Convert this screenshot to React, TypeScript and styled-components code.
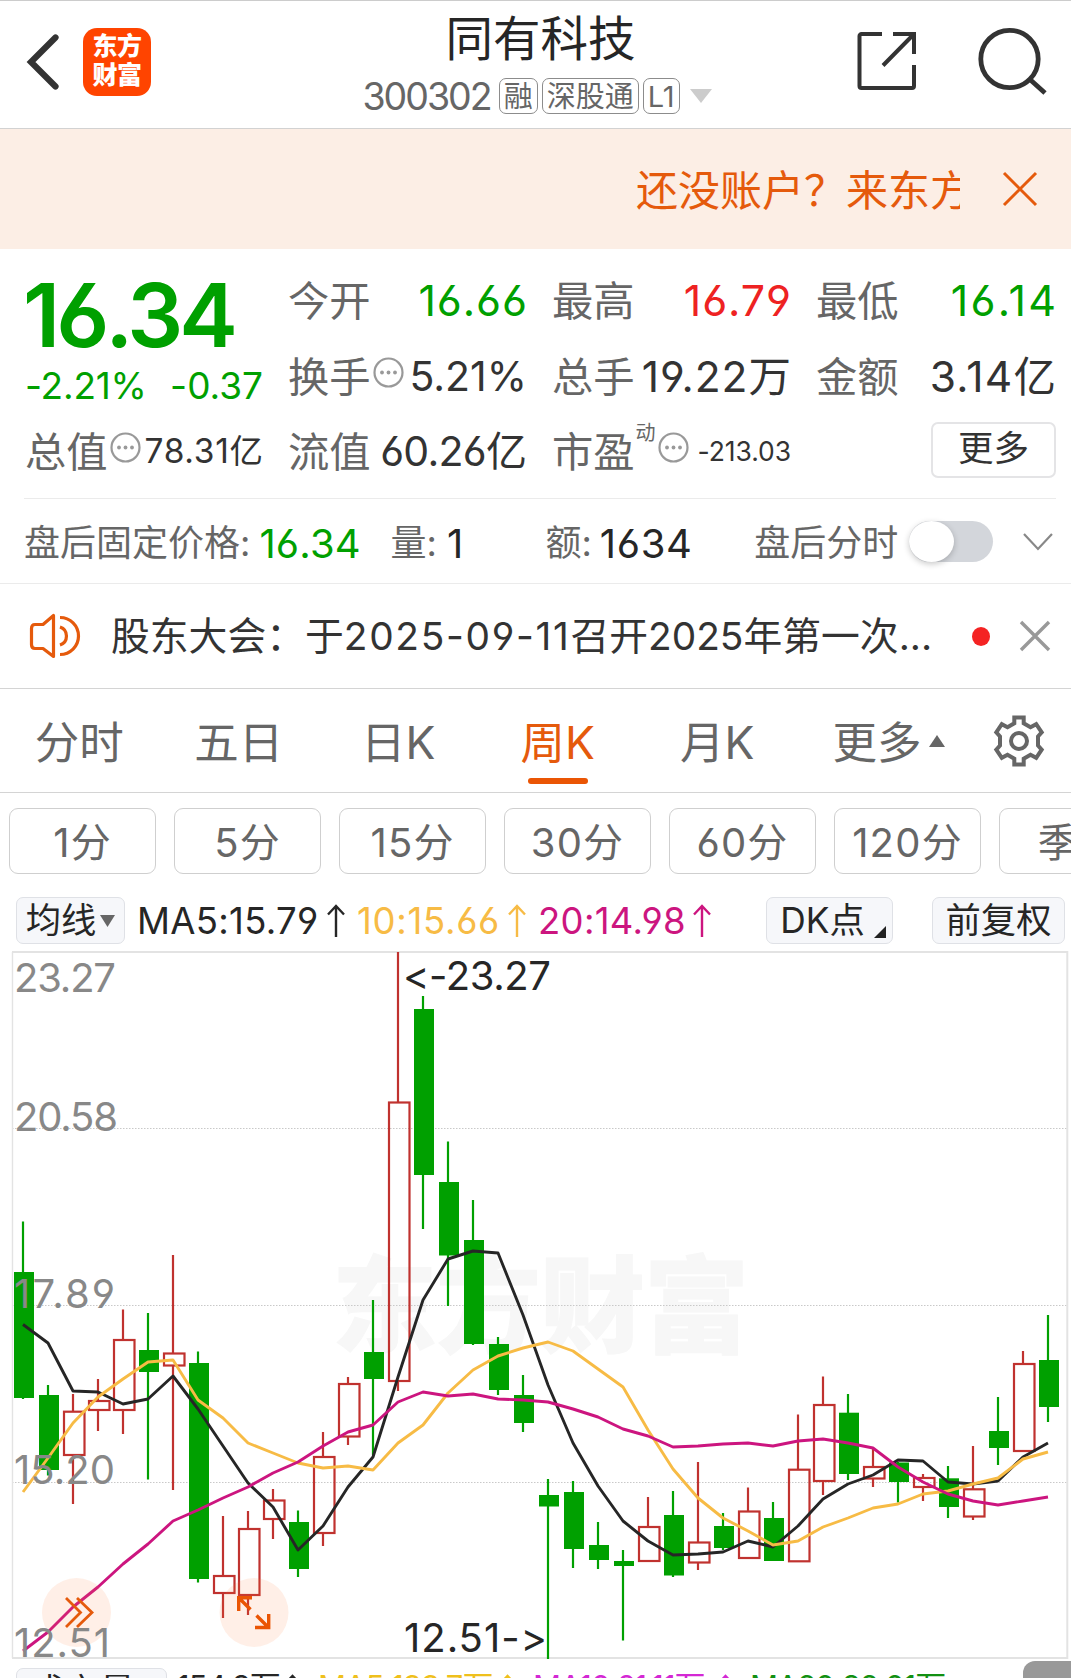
import React from "react";
import styled, { createGlobalStyle } from "styled-components";

const C = {
  green: "#00a000",
  red: "#ee2222",
  orange: "#e55a0c",
  text: "#333333",
  ink: "#262626",
  grey: "#666666",
  gold: "#f7bb45",
  pink: "#cc157f",
};

const Global = createGlobalStyle`
  * { box-sizing: border-box; }
  html, body { margin: 0; padding: 0; background: #fff; }
  body {
    font-family: Inter, "Noto Sans CJK SC", sans-serif;
    font-feature-settings: "cv03", "cv04", "calt" 0;
  }
`;

const Page = styled.div`
  width: 1071px;
  height: 1678px;
  overflow: hidden;
  display: flex;
  flex-direction: column;
  background: #fff;
  border-top: 1px solid #cccccc;
`;

const Txt = styled.span<{ $size: number; $color?: string; $track?: number; $weight?: number }>`
  font-size: ${(p) => p.$size}px;
  line-height: 1.2;
  color: ${(p) => p.$color ?? C.text};
  letter-spacing: ${(p) => p.$track ?? 0}px;
  margin-right: ${(p) => -(p.$track ?? 0)}px;
  font-weight: ${(p) => p.$weight ?? 400};
  white-space: pre;
`;

/* ---------- header ---------- */
const Header = styled.header`
  flex: none;
  height: 128px;
  display: grid;
  grid-template-columns: 330px 1fr 330px;
  border-bottom: 1px solid #d2d2d2;
`;
const HeaderLeft = styled.div`
  display: flex;
  align-items: center;
  padding: 0 0 6px 25px;
  gap: 22px;
`;
const HeaderRight = styled.div`
  display: flex;
  align-items: center;
  justify-content: flex-end;
  padding: 0 24px 7px 0;
  gap: 60px;
`;
const Logo = styled.div`
  width: 68px;
  height: 68px;
  border-radius: 14px;
  background: #ff4400;
  color: #fff;
  display: flex;
  flex-direction: column;
  align-items: center;
  justify-content: center;
  padding-bottom: 2px;
  font-size: 25px;
  font-weight: 900;
  line-height: 29px;
  letter-spacing: -0.5px;
`;
const HeaderMid = styled.div`
  display: flex;
  flex-direction: column;
  align-items: center;
  padding-top: 8px;
`;
const StockName = styled.h1`
  margin: 0;
  font-size: 47.5px;
  line-height: 60px;
  font-weight: 400;
  color: ${C.ink};
  padding-left: 10px;
`;
const CodeRow = styled.div`
  display: flex;
  align-items: center;
  height: 40px;
  margin-top: 7px;
  padding-left: 3px;
  gap: 4px;
`;
const Tag = styled.span`
  height: 36px;
  padding: 0 4px;
  border: 1px solid #8c8c8c;
  border-radius: 7px;
  font-size: 29px;
  line-height: 35px;
  color: ${C.grey};
`;

/* ---------- banner ---------- */
const Banner = styled.div`
  flex: none;
  height: 120px;
  background: #fceee5;
  display: flex;
  align-items: center;
  padding-left: 636px;
`;
const Marquee = styled.div`
  width: 324px;
  overflow: hidden;
  white-space: nowrap;
  font-size: 42px;
  line-height: 60px;
  color: ${C.orange};
  margin: 4px 42px 0 0;
`;

/* ---------- quote ---------- */
const Quote = styled.section`
  flex: none;
  height: 250px;
  margin: 0 15px 0 24px;
  padding: 14px 0 0 1px;
  border-bottom: 1px solid #ebebeb;
  display: grid;
  grid-template-columns: 238px 239px 239px 240px;
  grid-template-rows: 76px 75px 75px;
  column-gap: 25px;
`;
const PriceBlock = styled.div`
  grid-row: 1 / 3;
  display: flex;
  flex-direction: column;
  justify-content: space-between;
  padding: 0 0 6px;
`;
const Price = styled.div`
  margin: 8px 0 0 -2px;
  font-size: 88px;
  line-height: 88px;
  font-weight: 600;
  letter-spacing: -4px;
  color: ${C.green};
`;
const Change = styled.div`
  display: flex;
  justify-content: space-between;
`;
const Cell = styled.div`
  display: flex;
  align-items: center;
  justify-content: space-between;
  white-space: nowrap;
`;
const CellLabel = styled.div`
  flex: none;
  display: flex;
  align-items: center;
  font-size: 41.3px;
  line-height: 60px;
  color: ${C.grey};
  gap: 2px;
`;
const Sup = styled.span`
  align-self: flex-start;
  font-size: 20px;
  line-height: 20px;
  margin: 1px 0 0 -1px;
`;
const MoreButton = styled.button`
  margin: -4px 0 0 auto;
  width: 125px;
  height: 56px;
  border: 2px solid #e4e4e6;
  border-radius: 7px;
  background: #fff;
  font: inherit;
  font-size: 35.5px;
  line-height: 48px;
  color: ${C.text};
  padding: 0 0 2px;
`;

/* ---------- after hours ---------- */
const AfterHours = styled.section`
  flex: none;
  height: 85px;
  display: flex;
  align-items: center;
  padding: 5px 18px 0 24px;
  border-bottom: 1px solid #ebebeb;
`;
const Pair = styled.div<{ $w: number; $gap?: number }>`
  width: ${(p) => p.$w}px;
  display: flex;
  align-items: center;
  gap: ${(p) => p.$gap ?? 8}px;
`;
const Switch = styled.div`
  width: 84px;
  height: 41px;
  margin: -4px 30px 0 11px;
  border-radius: 21px;
  background: #d3d6db;
`;
const Knob = styled.div`
  width: 45px;
  height: 41px;
  border-radius: 50%;
  background: #fff;
  box-shadow: 0 2px 6px rgba(0, 0, 0, 0.22);
`;

/* ---------- notice ---------- */
const Notice = styled.section`
  flex: none;
  height: 105px;
  display: flex;
  align-items: center;
  padding: 0 20px 0 28px;
  border-bottom: 1px solid #d4d4d4;
`;
const NoticeText = styled.div`
  width: 830px;
  margin-left: 29px;
  font-size: 38.8px;
  line-height: 60px;
  color: ${C.text};
  white-space: nowrap;
`;
const DateText = styled.span`
  letter-spacing: 1.7px;
`;
const Dot = styled.span`
  width: 18px;
  height: 19px;
  border-radius: 50%;
  background: #f42323;
  margin: 0 29px 0 auto;
`;

/* ---------- tabs ---------- */
const Tabs = styled.nav`
  flex: none;
  height: 104px;
  display: flex;
  border-bottom: 1px solid #d4d4d4;
`;
const Tab = styled.div<{ $active?: boolean }>`
  width: 159.5px;
  display: flex;
  flex-direction: column;
  align-items: center;
  padding: 23px 1px 0 0;
  font-size: 44.5px;
  line-height: 62px;
  color: ${(p) => (p.$active ? C.orange : C.grey)};
  &::after {
    content: "";
    width: 60px;
    height: 6px;
    margin-top: 4px;
    border-radius: 3px;
    background: ${(p) => (p.$active ? "#ea5504" : "transparent")};
  }
`;
const MoreTab = styled.div`
  display: flex;
  align-items: center;
  padding: 5px 0 0 35px;
  gap: 7px;
  width: 195px;
  font-size: 44.5px;
  line-height: 62px;
  color: ${C.grey};
  svg { margin-top: -4px; }
`;

/* ---------- intervals ---------- */
const Intervals = styled.div`
  flex: none;
  height: 96px;
  display: flex;
  gap: 18px;
  padding: 15px 0 0 9px;
`;
const Interval = styled.button`
  flex: none;
  width: 147px;
  height: 66px;
  border: 1.5px solid #cfcfcf;
  border-radius: 9px;
  background: #fff;
  padding: 3px 0 0;
  font: inherit;
  font-feature-settings: inherit;
  font-size: 40px;
  letter-spacing: 1.2px;
  line-height: 60px;
  color: ${C.grey};
`;

/* ---------- indicator row ---------- */
const Indicators = styled.div`
  flex: none;
  height: 62px;
  display: flex;
  align-items: center;
  padding: 1px 7px 0 16px;
`;
const Chip = styled.button<{ $w: number; $ml?: number; $pl?: number }>`
  flex: none;
  width: ${(p) => p.$w}px;
  height: 47px;
  margin-left: ${(p) => p.$ml ?? 0}px;
  border: 1.5px solid #dfe1e6;
  border-radius: 7px;
  background: #f6f7fa;
  padding: 0 0 0 ${(p) => p.$pl ?? 0}px;
  font: inherit;
  font-size: 35.3px;
  line-height: 42px;
  color: ${C.ink};
  display: flex;
  align-items: center;
  justify-content: center;
  gap: 4px;
`;
const Ma = styled.div<{ $w: number; $ml: number; $color: string }>`
  flex: none;
  width: ${(p) => p.$w}px;
  margin: 2px 0 0 ${(p) => p.$ml}px;
  display: flex;
  align-items: center;
  justify-content: space-between;
  color: ${(p) => p.$color};
  svg { flex: none; margin-top: -2px; }
`;

/* ---------- chart & volume ---------- */
const ChartBox = styled.div`
  flex: none;
  height: 710px;
  svg { display: block; }
`;
const VolumeRow = styled.div`
  flex: none;
  height: 46px;
  display: flex;
  align-items: flex-start;
  padding: 7px 0 0 16px;
`;
const VolumeText = styled.div<{ $w: number; $ml: number; $color: string }>`
  flex: none;
  width: ${(p) => p.$w}px;
  margin: 1px 0 0 ${(p) => p.$ml}px;
  display: flex;
  justify-content: space-between;
  align-items: center;
  white-space: nowrap;
  font-size: 31px;
  line-height: 36px;
  letter-spacing: -1px;
  color: ${(p) => p.$color};
`;
const FloatTab = styled.div`
  width: 48px;
  height: 46px;
  margin: -7px 0 0 auto;
  flex: none;
  border-radius: 12px 0 0 0;
  background: #999;
`;

const MoreDots = () => (
  <svg width="31" height="31" viewBox="0 0 31 31" style={{ marginTop: -9 }}>
    <circle cx="15.5" cy="15.5" r="14" fill="none" stroke="#999" strokeWidth="2.2" />
    <circle cx="9" cy="15.5" r="1.9" fill="#999" />
    <circle cx="15.5" cy="15.5" r="1.9" fill="#999" />
    <circle cx="22" cy="15.5" r="1.9" fill="#999" />
  </svg>
);

const Arrow = ({ h = 33, w = 18 }: { h?: number; w?: number }) => (
  <svg width={w} height={h} viewBox="0 0 18 33" fill="none" stroke="currentColor" strokeWidth="2.4">
    <path d="M9 33V2M1 10.5L9 2l8 8.5" />
  </svg>
);

/* [up?, high, bodyTop, bodyBottom, low] in page pixels */
const candles: [number, number, number, number, number][] = [
  [0, 1221.5, 1272, 1398, 1399], [0, 1385, 1395, 1470, 1475.5], [1, 1394, 1411.7, 1455, 1504],
  [1, 1379, 1401, 1410, 1431], [1, 1309.5, 1340, 1410, 1434], [0, 1313, 1350, 1372, 1479.5],
  [1, 1255, 1353.5, 1365.5, 1490], [0, 1351.5, 1363, 1579, 1582.5], [1, 1516, 1576, 1593, 1618],
  [1, 1511, 1529, 1595, 1615], [1, 1489, 1500.5, 1519, 1539], [0, 1510.5, 1522, 1569, 1577],
  [1, 1432, 1457, 1533, 1546], [1, 1377, 1384, 1436.5, 1445], [0, 1300, 1352, 1379, 1455],
  [1, 952, 1102.5, 1381, 1391], [0, 996, 1009, 1175, 1229], [0, 1141.5, 1182, 1255.5, 1306],
  [0, 1200, 1240, 1344, 1345], [0, 1337, 1344, 1390, 1395], [0, 1375, 1395, 1423, 1432],
  [0, 1479, 1495, 1506.5, 1659], [0, 1481, 1492, 1549, 1568], [0, 1522, 1545, 1560, 1569],
  [0, 1550, 1561, 1566, 1640.5], [1, 1497, 1527, 1561, 1561], [0, 1491, 1515, 1575.5, 1577],
  [1, 1462, 1542.5, 1562.5, 1570], [0, 1513, 1526, 1548, 1550], [1, 1487.5, 1511.5, 1558, 1558],
  [0, 1502, 1518, 1561, 1561], [1, 1414.5, 1469.7, 1561.3, 1561], [1, 1376.5, 1405, 1481, 1495],
  [0, 1394, 1412.7, 1474, 1480], [1, 1449, 1467, 1478.5, 1487], [0, 1462, 1462.5, 1482, 1502.5],
  [1, 1474, 1478, 1487, 1501], [0, 1466, 1478.3, 1507, 1518], [1, 1446, 1489.3, 1516.5, 1520],
  [0, 1397, 1431, 1448, 1465], [1, 1351, 1364, 1451, 1451], [0, 1315, 1360, 1407, 1422],
];
const ma5 = [1324.5, 1343, 1391, 1392, 1404, 1399, 1376, 1409, 1446, 1483, 1507, 1550, 1526, 1487, 1457, 1377, 1300, 1259, 1251, 1253, 1315, 1385, 1443, 1486, 1521, 1541, 1555, 1554, 1552, 1541, 1547, 1526, 1499, 1484, 1475, 1460, 1461, 1482, 1484, 1481, 1457, 1443];
const ma10 = [1492, 1458, 1423, 1397, 1379, 1362, 1360, 1400, 1418, 1443, 1453, 1463, 1468, 1466, 1470, 1443, 1425, 1393, 1370, 1356, 1348, 1342, 1351, 1369, 1387, 1430, 1469, 1498, 1518, 1531, 1545, 1541, 1527, 1518, 1508, 1504, 1494, 1491, 1484, 1478, 1459, 1452];
const ma20 = [1651, 1632, 1607, 1587, 1564, 1544, 1521, 1510, 1498, 1487, 1473, 1462, 1446, 1432, 1425, 1402, 1392, 1396, 1394, 1399, 1400, 1402, 1409, 1417, 1429, 1436, 1447, 1446, 1444, 1443, 1446, 1441, 1439, 1443, 1448, 1467, 1482, 1494, 1501, 1505, 1501, 1497];
const xAt = (i: number) => 23 + 25 * i;
const line = (v: number[]) => v.map((y, i) => `${xAt(i)},${y}`).join(" ");

const axis: [string, number, number][] = [
  ["23.27", 991.5, 102], ["20.58", 1131, 104], ["17.89", 1307.5, 101], ["15.20", 1484, 101], ["12.51", 1657, 96],
];

const Chart = () => (
  <svg width="1071" height="710" viewBox="0 951 1071 710">
    <text x="332" y="1344" fontSize="105" fontWeight="900" fill="#f7f7f7" stroke="#f7f7f7" strokeWidth="1" textLength="417">东方财富</text>
    <g stroke="#c9c9c9" strokeWidth="1" strokeDasharray="1.5 1.5">
      <line x1="12" x2="1067" y1="1128.5" y2="1128.5" />
      <line x1="12" x2="1067" y1="1305.5" y2="1305.5" />
      <line x1="12" x2="1067" y1="1482.5" y2="1482.5" />
    </g>
    <path d="M12.5 952V1658" stroke="#e3e3e3" strokeWidth="1.4" />
    <path d="M12 952H1067.3V1658H12" stroke="#e3e3e3" strokeWidth="2" fill="none" />
    {candles.map(([up, hi, top, bot, lo], i) => {
      const x = xAt(i);
      return up ? (
        <g key={i} stroke="#c0322f" strokeWidth="2.2" fill="none">
          <path d={`M${x} ${hi}V${top}M${x} ${bot}V${lo}`} />
          <rect x={x - 9} y={top} width="20.500" height={bot - top} />
        </g>
      ) : (
        <g key={i} fill="#00a000">
          <rect x={x - 1.1} y={hi} width="2.2" height={lo - hi} />
          <rect x={x - 9} y={top} width="20" height={bot - top} />
        </g>
      );
    })}
    <g fill="none" strokeWidth="2.9" strokeLinejoin="round">
      <polyline points={line(ma5)} stroke="#262626" />
      <polyline points={line(ma10)} stroke={C.gold} />
      <polyline points={line(ma20)} stroke={C.pink} />
    </g>
    <circle cx="76.5" cy="1612.5" r="34.5" fill="#ff7a3c" fillOpacity="0.12" />
    <circle cx="254" cy="1612.5" r="34.5" fill="#ff7a3c" fillOpacity="0.12" />
    <path d="M66 1598l14.5 14.5L66 1627M77 1598l15 14.5L77 1627" stroke={C.orange} strokeWidth="2.8" fill="none" />
    <path
      d="M252 1597.7H238.7V1611M239 1598l11.5 11.5M255 1627.5H268.7V1614M268 1627L256.5 1615.500"
      stroke="#ea5504"
      strokeWidth="3.4"
      fill="none"
    />
    <g fontSize="40" fill="#888">
      {axis.map(([t, y, w]) => (
        <text key={t} x="14" y={y} textLength={w}>{t}</text>
      ))}
    </g>
    <g fontSize="40" fill={C.ink}>
      <text x="403" y="989.500" textLength="148">&lt;-23.27</text>
      <text x="404" y="1651.500" textLength="143">12.51-&gt;</text>
    </g>
  </svg>
);

export default function App() {
  return (
    <Page>
      <Global />
      <Header>
        <HeaderLeft>
          <svg width="36" height="60" viewBox="0 0 36 60" fill="none" stroke="#333" strokeWidth="6.2" strokeLinecap="round">
            <path d="M30.500 5.500L6 30l24.500 24.500" />
          </svg>
          <Logo><span>东方</span><span>财富</span></Logo>
        </HeaderLeft>
        <HeaderMid>
          <StockName>同有科技</StockName>
          <CodeRow>
            <Txt $size={37.5} $color={C.grey} $track={-2}>300302</Txt>
            <Tag style={{ marginLeft: 2 }}>融</Tag>
            <Tag>深股通</Tag>
            <Tag>L1</Tag>
            <svg width="22" height="14" viewBox="0 0 22 14" style={{ marginLeft: 6 }}><path d="M0 0h22L11 14z" fill="#ccc" /></svg>
          </CodeRow>
        </HeaderMid>
        <HeaderRight>
          <svg width="60" height="60" viewBox="0 0 60 60" fill="none" stroke="#333" strokeWidth="4" strokeLinejoin="round">
            <path d="M25 3H4.500a2 2 0 0 0-2 2V55a2 2 0 0 0 2 2H55a2 2 0 0 0 2-2V34" />
            <path d="M36 3H57V23M57 3L26 34.500" strokeLinejoin="miter" />
          </svg>
          <svg width="70" height="70" viewBox="0 0 70 70" fill="none" stroke="#333" strokeWidth="4.800">
            <ellipse cx="32.500" cy="33" rx="28.700" ry="28.700" />
            <path d="M53 53.500L68 67" />
          </svg>
        </HeaderRight>
      </Header>

      <Banner>
        <Marquee>还没账户？来东方财富</Marquee>
        <svg width="36" height="36" viewBox="0 0 36 36" stroke={C.orange} strokeWidth="3"><path d="M2 2l32 32M34 2L2 34" /></svg>
      </Banner>

      <Quote>
        <PriceBlock>
          <Price>16.34</Price>
          <Change>
            <Txt $size={37} $color={C.green} $track={-0.2}>-2.21%</Txt>
            <Txt $size={37} $color={C.green}>-0.37</Txt>
          </Change>
        </PriceBlock>
        <Cell><CellLabel>今开</CellLabel><Txt $size={43} $color={C.green} $track={0.9}>16.66</Txt></Cell>
        <Cell><CellLabel>最高</CellLabel><Txt $size={43} $color={C.red} $track={0.9}>16.79</Txt></Cell>
        <Cell><CellLabel>最低</CellLabel><Txt $size={43} $color={C.green} $track={2.2}>16.14</Txt></Cell>
        <Cell><CellLabel>换手<MoreDots /></CellLabel><Txt $size={41}>5.21%</Txt></Cell>
        <Cell><CellLabel>总手</CellLabel><Txt $size={42.5} $track={1}>19.22万</Txt></Cell>
        <Cell><CellLabel>金额</CellLabel><Txt $size={42.5} $track={1.3}>3.14亿</Txt></Cell>
        <Cell><CellLabel>总值<MoreDots /></CellLabel><Txt $size={33.5} $track={0.7}>78.31亿</Txt></Cell>
        <Cell><CellLabel>流值</CellLabel><Txt $size={41} $track={-0.7}>60.26亿</Txt></Cell>
        <Cell><CellLabel>市盈<Sup>动</Sup><MoreDots /></CellLabel><Txt $size={26.5} $track={-0.1}>-213.03</Txt></Cell>
        <Cell><MoreButton>更多</MoreButton></Cell>
      </Quote>

      <AfterHours>
        <Pair $w={367} $gap={9}><Txt $size={36} $color={C.grey}>盘后固定价格:</Txt><Txt $size={40} $color={C.green} $track={0.2}>16.34</Txt></Pair>
        <Pair $w={155} $gap={10}><Txt $size={36} $color={C.grey}>量:</Txt><Txt $size={40} $color={C.ink}>1</Txt></Pair>
        <Pair $w={209}><Txt $size={36} $color={C.grey}>额:</Txt><Txt $size={40} $color={C.ink} $track={0.7}>1634</Txt></Pair>
        <Txt $size={36} $color={C.grey}>盘后分时</Txt>
        <Switch><Knob /></Switch>
        <svg width="30" height="18" viewBox="0 0 30 18" fill="none" stroke="#888" strokeWidth="2.200" style={{ marginTop: -4 }}><path d="M1 1l14 15L29 1" /></svg>
      </AfterHours>

      <Notice>
        <svg width="54" height="46" viewBox="0 0 54 46" fill="none" stroke={C.orange} strokeWidth="3.200">
          <path d="M25.500 2.500V43.500L15 35.500H7q-3.500 0-3.500-4V15.500q0-4 3.500-4H15z" strokeLinejoin="round" />
          <path d="M32 14a9.500 9.500 0 0 1 0 18M32 4.500a18.500 18.500 0 0 1 0 37" />
        </svg>
        <NoticeText>股东大会：于<DateText>2025-09-11</DateText>召开2025年第一次...</NoticeText>
        <Dot />
        <svg width="32" height="32" viewBox="0 0 32 32" stroke="#999" strokeWidth="3.400"><path d="M2 2l28 28M30 2L2 30" /></svg>
      </Notice>

      <Tabs>
        <Tab>分时</Tab>
        <Tab>五日</Tab>
        <Tab>日K</Tab>
        <Tab $active>周K</Tab>
        <Tab>月K</Tab>
        <MoreTab>更多<svg width="16" height="12" viewBox="0 0 16 12"><path d="M8 0l8 12H0z" fill="#666" /></svg></MoreTab>
        <svg width="52" height="52" viewBox="0 0 52 52" fill="none" stroke="#666" strokeWidth="4" style={{ marginTop: 26 }}>
          <path d="M21.300 2.500H30.700V8.300L37.500 12.200L43.200 9.200L48.700 17.300L45 21.500V30.500L48.700 34.700L43.200 42.800L37.500 39.800L30.700 43.700V49.500H21.300V43.700L14.500 39.800L8.800 42.800L3.300 34.700L7 30.500V21.500L3.300 17.300L8.800 9.200L14.500 12.200L21.300 8.300Z" />
          <circle cx="26" cy="26" r="8" />
        </svg>
      </Tabs>

      <Intervals>
        {["1分", "5分", "15分", "30分", "60分", "120分", "季K"].map((t) => (
          <Interval key={t}>{t}</Interval>
        ))}
      </Intervals>

      <Indicators>
        <Chip $w={109}>均线<svg width="15" height="12" viewBox="0 0 15 12"><path d="M0 0h15L7.500 12z" fill="#666" /></svg></Chip>
        <Ma $w={208} $ml={12} $color={C.ink}><Txt $size={36.5} $color="inherit" $track={0.3}>MA5:15.79</Txt><Arrow /></Ma>
        <Ma $w={169} $ml={12} $color={C.gold}><Txt $size={36.5} $color="inherit" $track={0.7}>10:15.66</Txt><Arrow /></Ma>
        <Ma $w={173} $ml={12} $color={C.pink}><Txt $size={36.5} $color="inherit" $track={0.3}>20:14.98</Txt><Arrow /></Ma>
        <Chip $w={127} $ml={55} $pl={7}>DK点<svg width="12" height="12" viewBox="0 0 12 12" style={{ margin: "22px 0 0 5px" }}><path d="M12 0v12H0z" fill="#222" /></svg></Chip>
        <Chip $w={133} $ml={39}>前复权</Chip>
      </Indicators>

      <ChartBox><Chart /></ChartBox>

      <VolumeRow>
        <Chip $w={151}>成交量<svg width="15" height="12" viewBox="0 0 15 12"><path d="M0 0h15L7.500 12z" fill="#666" /></svg></Chip>
        <VolumeText $w={123} $ml={10} $color={C.ink}>154.8万<Arrow h={26} w={15} /></VolumeText>
        <VolumeText $w={197} $ml={18} $color="#efc01c">MA5:133.7万<Arrow h={26} w={15} /></VolumeText>
        <VolumeText $w={200} $ml={18} $color="#d428d4">MA10:91.11万<Arrow h={26} w={15} /></VolumeText>
        <VolumeText $w={202} $ml={17} $color="#129012">MA20:82.01万<Arrow h={26} w={15} /></VolumeText>
        <FloatTab />
      </VolumeRow>
    </Page>
  );
}
